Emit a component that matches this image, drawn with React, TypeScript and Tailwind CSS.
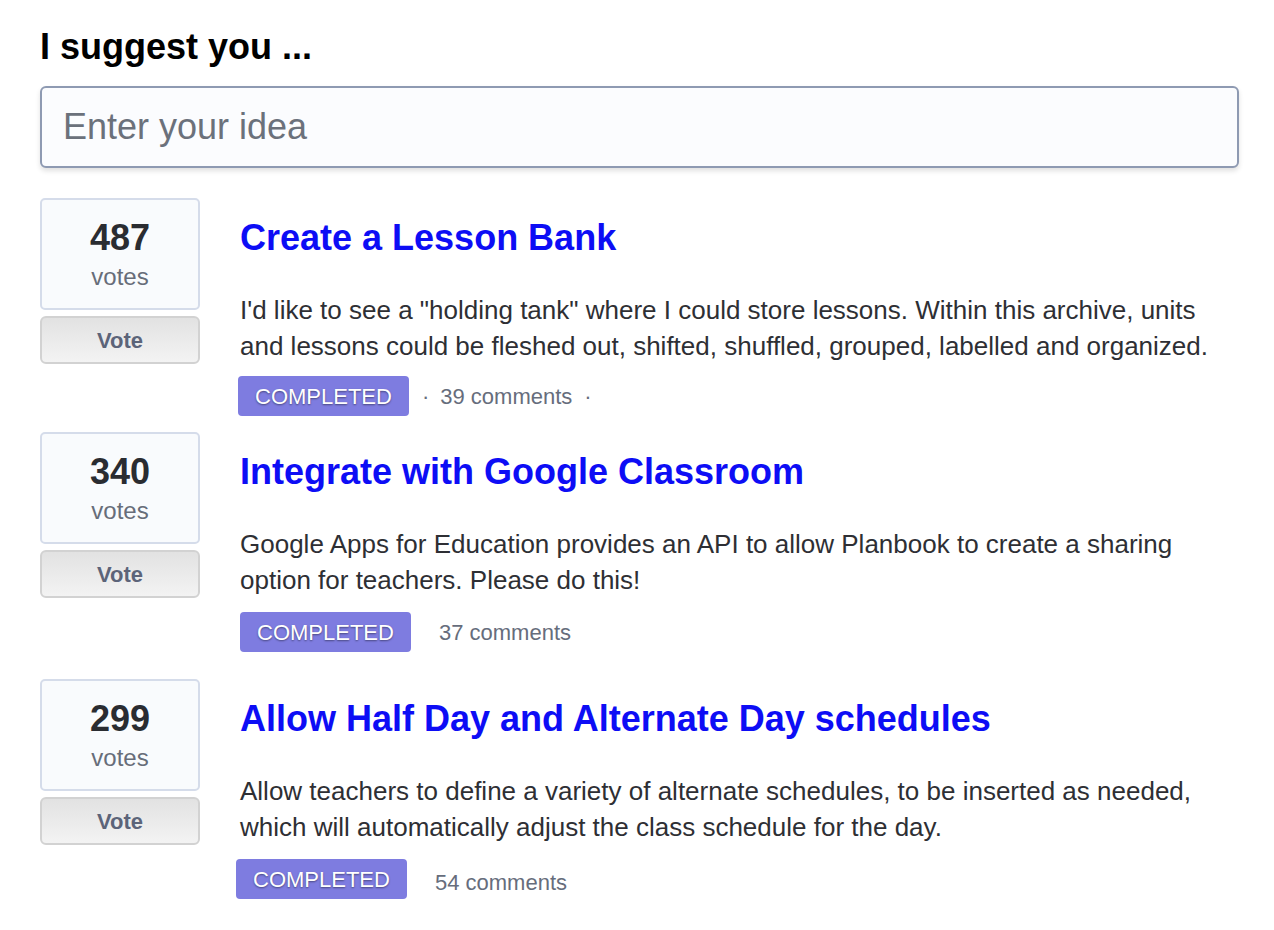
import React from "react";

type Idea = {
  votes: number;
  title: string;
  desc: string;
  comments: number;
  dots: boolean;
  mt: string;
  badgeMt: string;
  badgeMl: string;
  commentMt: string;
};

const ideas: Idea[] = [
  {
    votes: 487,
    title: "Create a Lesson Bank",
    desc: 'I\'d like to see a "holding tank" where I could store lessons. Within this archive, units and lessons could be fleshed out, shifted, shuffled, grouped, labelled and organized.',
    comments: 39,
    dots: true,
    mt: "mt-[30px]",
    badgeMt: "mt-[12px]",
    badgeMl: "ml-[-2px]",
    commentMt: "mt-0",
  },
  {
    votes: 340,
    title: "Integrate with Google Classroom",
    desc: "Google Apps for Education provides an API to allow Planbook to create a sharing option for teachers. Please do this!",
    comments: 37,
    dots: false,
    mt: "mt-[16px]",
    badgeMt: "mt-[14px]",
    badgeMl: "ml-0",
    commentMt: "mt-0",
  },
  {
    votes: 299,
    title: "Allow Half Day and Alternate Day schedules",
    desc: "Allow teachers to define a variety of alternate schedules, to be inserted as needed, which will automatically adjust the class schedule for the day.",
    comments: 54,
    dots: false,
    mt: "mt-[27px]",
    badgeMt: "mt-[14px]",
    badgeMl: "ml-[-4px]",
    commentMt: "mt-[6px]",
  },
];

function IdeaRow({ idea }: { idea: Idea }) {
  return (
    <div className={`flex ${idea.mt}`}>
      <div className="w-[160px] shrink-0 flex flex-col">
        <div className="h-[112px] border-2 border-[#d5dcea] rounded-[5px] bg-[#f9fbfd] flex flex-col items-center">
          <div className="mt-[18px] text-[36px] leading-[40px] font-bold text-[#2a2c31]">{idea.votes}</div>
          <div className="mt-[3px] text-[24px] leading-[32px] text-[#676d79]">votes</div>
        </div>
        <div className="mt-[6px] h-[48px] border-2 border-[#d2d2d2] rounded-[6px] bg-gradient-to-b from-[#e2e2e2] to-[#f3f3f3] flex items-center justify-center text-[22px] font-bold text-[#5c6479]">
          Vote
        </div>
      </div>
      <div className="ml-[40px] flex-1 flex flex-col">
        <div className="mt-[18px] text-[36px] leading-[44px] font-bold text-[#0d0df5]">{idea.title}</div>
        <div className="mt-[32px] max-w-[985px] text-[26px] leading-[36px] text-[#2e2f34]">{idea.desc}</div>
        <div className={`${idea.badgeMt} ${idea.badgeMl} flex items-center text-[22px] text-[#666d7c]`}>
          <span className="h-[40px] px-[17px] rounded-[4px] bg-[#7e7ce0] text-white flex items-center [text-shadow:0_1px_2px_rgba(0,0,0,0.45)]">
            COMPLETED
          </span>
          {idea.dots ? (
            <>
              <span className="ml-[13px]">·</span>
              <span className="ml-[11px]">{idea.comments} comments</span>
              <span className="ml-[12px]">·</span>
            </>
          ) : (
            <span className={`ml-[28px] ${idea.commentMt}`}>{idea.comments} comments</span>
          )}
        </div>
      </div>
    </div>
  );
}

export default function App() {
  return (
    <div className="w-[1274px] min-h-[930px] bg-white font-['Liberation_Sans',Arial,sans-serif]">
      <div className="pl-[40px] pr-[35px] pt-[27px]">
        <h1 className="text-[36px] leading-[40px] font-bold text-black">I suggest you ...</h1>
        <div className="mt-[19px] h-[82px] border-2 border-[#8e9ab2] rounded-[6px] bg-[#fbfcfe] shadow-[0_3px_5px_rgba(0,0,0,0.12)] flex items-center pl-[21px]">
          <input
            className="w-full bg-transparent outline-none text-[36px] text-[#2e2f34] placeholder:text-[#6b717b]"
            placeholder="Enter your idea"
          />
        </div>
        {ideas.map((idea) => (
          <IdeaRow key={idea.title} idea={idea} />
        ))}
      </div>
    </div>
  );
}
